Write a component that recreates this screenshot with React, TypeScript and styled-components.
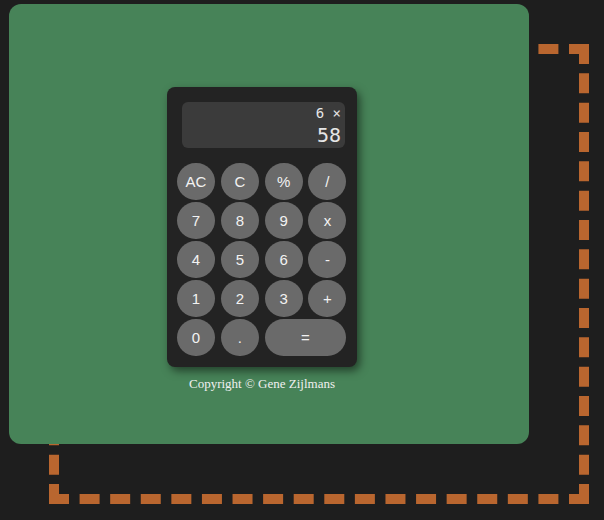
import React from "react";
import styled, { createGlobalStyle } from "styled-components";

const Global = createGlobalStyle`
  html, body { margin: 0; padding: 0; background: #1e1e1e; }
  body { width: 604px; height: 520px; overflow: hidden; }
`;

const Scene = styled.div`
  position: relative;
  width: 520px;
  height: 440px;
  margin: 4px 0 0 9px;
`;

const Frame = styled.div`
  position: absolute;
  left: 40px;
  top: 40px;
  width: 520px;
  height: 440px;
  border: 10px dashed #b9662f;
  z-index: 0;
`;

const Stage = styled.main`
  position: relative;
  z-index: 1;
  box-sizing: border-box;
  width: 520px;
  height: 440px;
  border-radius: 12px;
  background: #478358;
  display: flex;
  flex-direction: column;
  align-items: center;
  padding: 83px 14px 0 0;
`;

const Calculator = styled.section`
  box-sizing: border-box;
  width: 190px;
  padding: 15px 10px 11px;
  background: #232323;
  border-radius: 8px;
  box-shadow: 3px 4px 8px rgba(0, 0, 0, 0.5);
  display: flex;
  flex-direction: column;
  gap: 15px;
`;

const Display = styled.div`
  height: 46px;
  margin: 0 2px 0 5px;
  box-sizing: border-box;
  background: #3b3b3b;
  border-radius: 6px;
  padding: 2px 4px 0 0;
  display: flex;
  flex-direction: column;
  align-items: flex-end;
  color: #e6e6e6;
  font-family: "DejaVu Sans Mono", "Liberation Mono", monospace;
`;

const Previous = styled.div`
  font-size: 14px;
  line-height: 18px;
`;

const Current = styled.div`
  font-size: 20px;
  line-height: 26px;
`;

const Keys = styled.div`
  display: grid;
  grid-template-columns: repeat(4, 38px);
  grid-auto-rows: 37px;
  column-gap: 5.8px;
  row-gap: 2px;
`;

const Key = styled.button<{ $wide?: boolean }>`
  grid-column: ${(p) => (p.$wide ? "span 2" : "span 1")};
  border: none;
  margin: 0;
  padding: 0;
  border-radius: 19px;
  background: #6a6a6a;
  color: #f2f2f2;
  font-family: "Liberation Sans", Arial, sans-serif;
  font-size: 15px;
  cursor: pointer;
`;

const Copyright = styled.p`
  margin: 9px 0 0;
  font-family: "Liberation Serif", "Times New Roman", serif;
  font-size: 13px;
  color: #f0f0f0;
`;

const keys: { label: string; wide?: boolean }[] = [
  { label: "AC" }, { label: "C" }, { label: "%" }, { label: "/" },
  { label: "7" }, { label: "8" }, { label: "9" }, { label: "x" },
  { label: "4" }, { label: "5" }, { label: "6" }, { label: "-" },
  { label: "1" }, { label: "2" }, { label: "3" }, { label: "+" },
  { label: "0" }, { label: "." }, { label: "=", wide: true },
];

export default function App() {
  return (
    <>
      <Global />
      <Scene>
        <Frame />
        <Stage>
          <Calculator>
            <Display>
              <Previous>6 ×</Previous>
              <Current>58</Current>
            </Display>
            <Keys>
              {keys.map((k) => (
                <Key key={k.label} $wide={k.wide}>
                  {k.label}
                </Key>
              ))}
            </Keys>
          </Calculator>
          <Copyright>Copyright © Gene Zijlmans</Copyright>
        </Stage>
      </Scene>
    </>
  );
}
